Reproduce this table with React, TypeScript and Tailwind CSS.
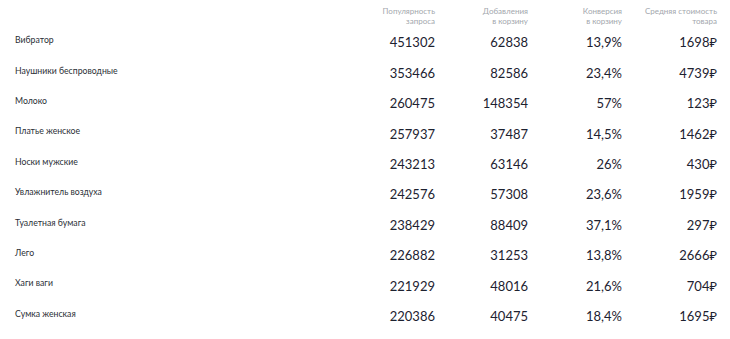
const rows = [
  { name: "Вибратор", pop: "451302", add: "62838", conv: "13,9%", price: "1698₽" },
  { name: "Наушники беспроводные", pop: "353466", add: "82586", conv: "23,4%", price: "4739₽" },
  { name: "Молоко", pop: "260475", add: "148354", conv: "57%", price: "123₽" },
  { name: "Платье женское", pop: "257937", add: "37487", conv: "14,5%", price: "1462₽" },
  { name: "Носки мужские", pop: "243213", add: "63146", conv: "26%", price: "430₽" },
  { name: "Увлажнитель воздуха", pop: "242576", add: "57308", conv: "23,6%", price: "1959₽" },
  { name: "Туалетная бумага", pop: "238429", add: "88409", conv: "37,1%", price: "297₽" },
  { name: "Лего", pop: "226882", add: "31253", conv: "13,8%", price: "2666₽" },
  { name: "Хаги ваги", pop: "221929", add: "48016", conv: "21,6%", price: "704₽" },
  { name: "Сумка женская", pop: "220386", add: "40475", conv: "18,4%", price: "1695₽" },
];

const headers = [
  ["Популярность", "запроса"],
  ["Добавления", "в корзину"],
  ["Конверсия", "в корзину"],
  ["Средняя стоимость", "товара"],
];

export default function App() {
  return (
    <div className="h-[339px] w-[730px] overflow-hidden bg-white pl-[15px] pr-[13px] font-['Lato','Noto_Sans',sans-serif]">
      <div className="grid h-[28px] grid-cols-[1fr_80px_93px_94px_95px] pt-[6px]">
        <div />
        {headers.map(([a, b]) => (
          <div key={a} className="text-right text-[8px] leading-[10px] text-[#a3a7ad]">
            <div>{a}</div>
            <div>{b}</div>
          </div>
        ))}
      </div>

      {rows.map((row) => (
        <div
          key={row.name}
          className="grid h-[30.4px] grid-cols-[1fr_80px_93px_94px_95px] items-center text-[#1d2230]"
        >
          <div className="pb-[7px] text-[8.7px] text-[#2b2f36]">{row.name}</div>
          <div className="text-right text-[13px]">{row.pop}</div>
          <div className="text-right text-[13px]">{row.add}</div>
          <div className="text-right text-[13px]">{row.conv}</div>
          <div className="text-right text-[13px]">{row.price}</div>
        </div>
      ))}
    </div>
  );
}
